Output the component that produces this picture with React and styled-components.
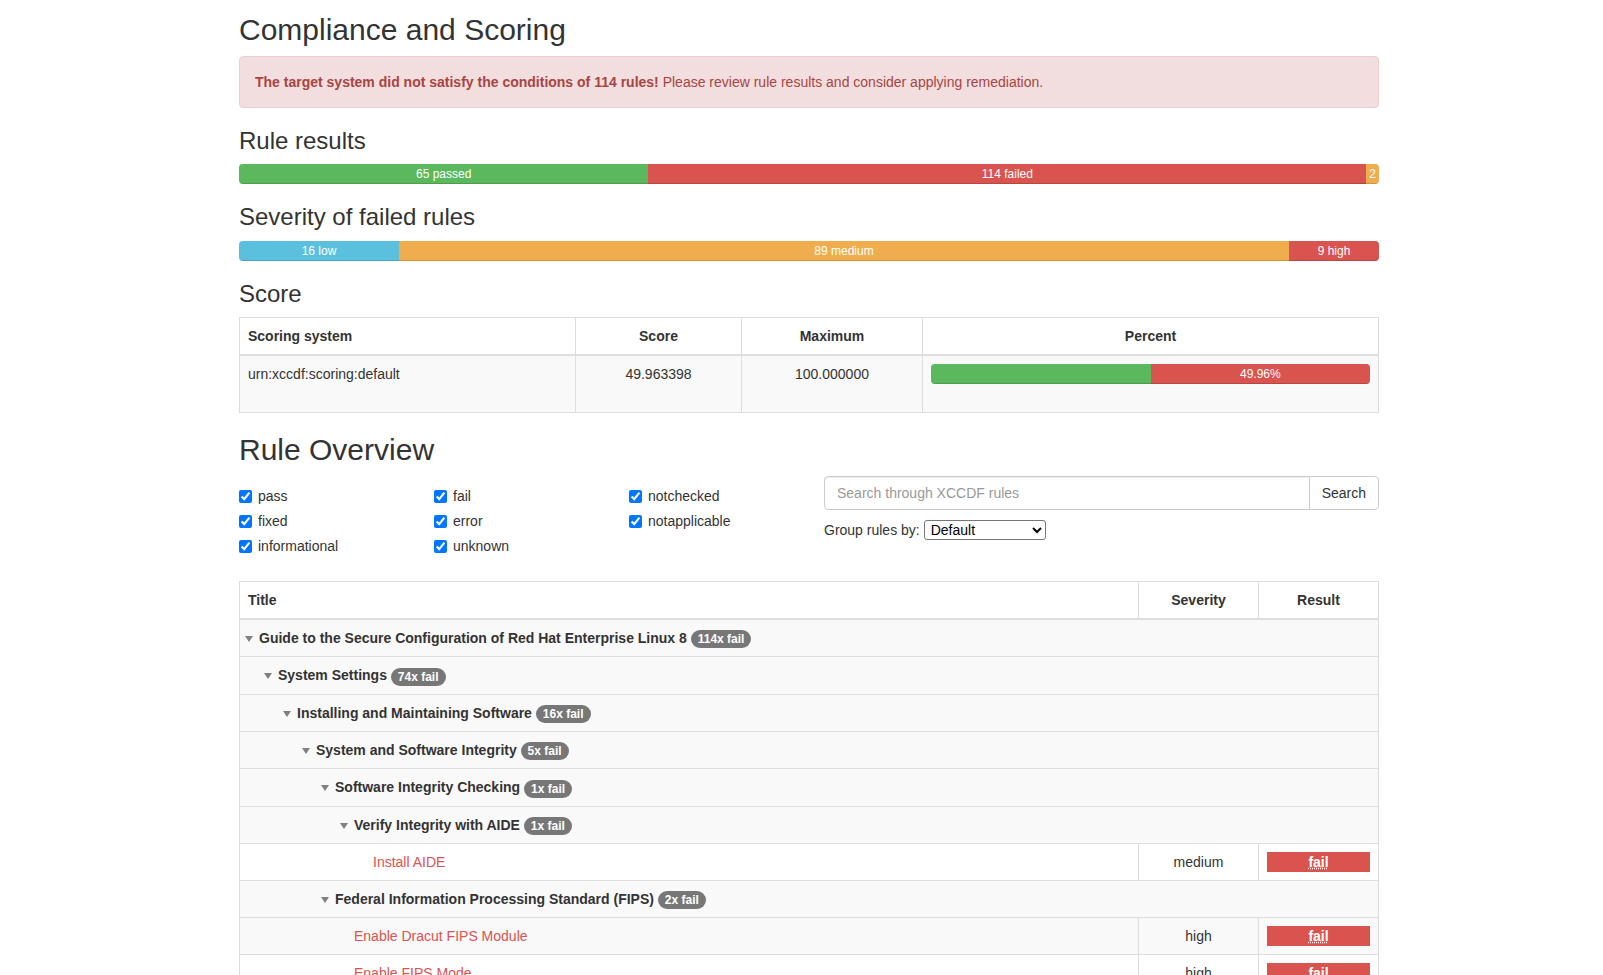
import React from 'react';
import styled, { createGlobalStyle } from 'styled-components';

// --- Global ---

const GlobalStyle = createGlobalStyle`
  html, body {
    margin: 0;
    padding: 0;
  }
  body {
    font-family: "Liberation Sans", Arial, Helvetica, sans-serif;
    font-size: 14px;
    line-height: 1.42857143;
    color: #333;
    background: #fff;
  }
`;

// --- Layout ---

const Page = styled.div`
  padding-left: 15px;
`;

const Container = styled.div`
  width: 1140px;
  margin: 0 auto;
`;

const PageTitle = styled.h2`
  font-size: 30px;
  font-weight: 500;
  line-height: 1.1;
  margin: ${(p) => (p.$first ? '13px' : '20px')} 0 10px;
`;

const SectionTitle = styled.h3`
  font-size: 24px;
  font-weight: 500;
  line-height: 1.1;
  margin: 20px 0 10px;
`;

const Alert = styled.div`
  padding: 15px;
  margin-bottom: 20px;
  border: 1px solid #ebccd1;
  border-radius: 4px;
  background: #f2dede;
  color: #a94442;
`;

// --- Progress bars ---

const tones = {
  success: '#5cb85c',
  danger: '#d9534f',
  warning: '#f0ad4e',
  info: '#5bc0de',
};

const Progress = styled.div`
  display: flex;
  height: 20px;
  margin-bottom: 20px;
  overflow: hidden;
  background: #f5f5f5;
  border-radius: 4px;
  box-shadow: inset 0 1px 2px rgba(0, 0, 0, 0.1);
`;

const Bar = styled.div`
  flex: none;
  height: 100%;
  overflow: hidden;
  white-space: nowrap;
  font-size: 12px;
  line-height: 20px;
  color: #fff;
  text-align: center;
  background: ${(p) => tones[p.$tone]};
  box-shadow: inset 0 -1px 0 rgba(0, 0, 0, 0.15);
`;

// --- Tables ---

const Table = styled.table`
  width: 100%;
  border-collapse: collapse;
  border-spacing: 0;
  border: 1px solid #ddd;
  margin: ${(p) => p.$top || 0} 0 20px;
`;

const Th = styled.th`
  box-sizing: border-box;
  width: ${(p) => p.$w || 'auto'};
  padding: 8px;
  line-height: 20px;
  font-weight: bold;
  text-align: ${(p) => p.$align || 'left'};
  vertical-align: bottom;
  border: 1px solid #ddd;
  border-bottom-width: 2px;
`;

const Tr = styled.tr`
  background: ${(p) => (p.$shaded ? '#f9f9f9' : '#fff')};
`;

const Td = styled.td`
  padding: 8px;
  line-height: 20px;
  vertical-align: top;
  text-align: ${(p) => p.$align || 'left'};
  border: 1px solid #ddd;
`;

// --- Rule overview controls ---

const Overview = styled.div`
  display: grid;
  grid-template-columns: 585px 1fr;
`;

const FilterGrid = styled.div`
  display: grid;
  grid-template-columns: repeat(3, 195px);
  padding-top: 10px;
`;

const FilterColumn = styled.div`
  display: flex;
  flex-direction: column;
  gap: 5px;
`;

const FilterLabel = styled.label`
  display: flex;
  align-items: center;
  height: 20px;
  cursor: pointer;
`;

const FilterBox = styled.input.attrs({ type: 'checkbox' })`
  width: 13px;
  height: 13px;
  margin: 0 6px 0 0;
`;

const SearchGroup = styled.div`
  display: flex;
  height: 34px;
`;

const SearchInput = styled.input`
  flex: 1;
  min-width: 0;
  box-sizing: border-box;
  height: 34px;
  padding: 6px 12px;
  font: 14px "Liberation Sans", Arial, sans-serif;
  color: #555;
  background: #fff;
  border: 1px solid #ccc;
  border-radius: 4px 0 0 4px;
  box-shadow: inset 0 1px 1px rgba(0, 0, 0, 0.075);
  outline: none;

  &::placeholder {
    color: #999;
  }
`;

const SearchButton = styled.button`
  box-sizing: border-box;
  height: 34px;
  margin-left: -1px;
  padding: 6px 12px;
  font: 14px "Liberation Sans", Arial, sans-serif;
  color: #333;
  background: #fff;
  border: 1px solid #ccc;
  border-radius: 0 4px 4px 0;
  cursor: pointer;
`;

const GroupLine = styled.div`
  display: flex;
  align-items: center;
  gap: 4px;
  height: 20px;
  margin-top: 10px;
`;

const GroupSelect = styled.select`
  box-sizing: border-box;
  width: 122px;
  height: 20px;
  padding: 0 0 0 2px;
  font: 14px "Liberation Sans", Arial, sans-serif;
  color: #000;
  background: #fff;
  border: 1px solid #767676;
  border-radius: 3px;
`;

// --- Rule tree ---

const Indent = styled.span`
  display: inline-block;
  box-sizing: content-box;
  width: 14px;
  margin-left: -3px;
  padding-left: ${(p) => p.$level * 19}px;
`;

const Caret = styled.span`
  display: inline-block;
  width: 0;
  height: 0;
  margin-bottom: 1px;
  border-left: 4px solid transparent;
  border-right: 4px solid transparent;
  border-top: 6px solid #808080;
`;

const GroupName = styled.strong`
  font-weight: bold;
`;

const Badge = styled.span`
  display: inline-block;
  padding: 3px 7px;
  font-size: 12px;
  font-weight: bold;
  line-height: 1;
  color: #fff;
  white-space: nowrap;
  vertical-align: middle;
  background: #777;
  border-radius: 10px;
`;

const RuleLink = styled.a`
  color: #d9534f;
  text-decoration: none;
`;

const ResultLabel = styled.span`
  display: block;
  font-weight: bold;
  line-height: 20px;
  color: #fff;
  text-align: center;
  background: #d9534f;
`;

const ResultAbbr = styled.abbr`
  text-decoration: underline dotted;
  cursor: help;
`;

// --- Data ---

const ruleResults = [
  { tone: 'success', count: 65, label: '65 passed' },
  { tone: 'danger', count: 114, label: '114 failed' },
  { tone: 'warning', count: 2, label: '2' },
];

const severities = [
  { tone: 'info', count: 16, label: '16 low' },
  { tone: 'warning', count: 89, label: '89 medium' },
  { tone: 'danger', count: 9, label: '9 high' },
];

const filters = [
  ['pass', 'fixed', 'informational'],
  ['fail', 'error', 'unknown'],
  ['notchecked', 'notapplicable'],
];

const tree = [
  { level: 0, title: 'Guide to the Secure Configuration of Red Hat Enterprise Linux 8', fails: 114 },
  { level: 1, title: 'System Settings', fails: 74 },
  { level: 2, title: 'Installing and Maintaining Software', fails: 16 },
  { level: 3, title: 'System and Software Integrity', fails: 5 },
  { level: 4, title: 'Software Integrity Checking', fails: 1 },
  { level: 5, title: 'Verify Integrity with AIDE', fails: 1 },
  { level: 6, title: 'Install AIDE', severity: 'medium', shaded: false },
  { level: 4, title: 'Federal Information Processing Standard (FIPS)', fails: 2 },
  { level: 5, title: 'Enable Dracut FIPS Module', severity: 'high', shaded: true },
  { level: 5, title: 'Enable FIPS Mode', severity: 'high', shaded: false },
  { level: 4, title: 'System Cryptographic Policies', fails: 2 },
  { level: 5, title: 'Configure BIND to use System Crypto Policy', severity: 'high', shaded: true },
];

const StackedBar = ({ items }) => {
  const total = items.reduce((sum, i) => sum + i.count, 0);
  return (
    <Progress>
      {items.map((i) => (
        <Bar key={i.label} $tone={i.tone} style={{ width: `${(i.count / total) * 100}%` }}>
          {i.label}
        </Bar>
      ))}
    </Progress>
  );
};

const TreeRow = ({ row }) => {
  if (row.fails) {
    return (
      <Tr $shaded>
        <Td colSpan={3}>
          <Indent $level={row.level}>
            <Caret />
          </Indent>
          <GroupName>{row.title}</GroupName> <Badge>{row.fails}x fail</Badge>
        </Td>
      </Tr>
    );
  }
  return (
    <Tr $shaded={row.shaded}>
      <Td>
        <Indent $level={row.level} />
        <RuleLink href="#">{row.title}</RuleLink>
      </Td>
      <Td $align="center">{row.severity}</Td>
      <Td $align="center">
        <ResultLabel>
          <ResultAbbr title="The target system or system component failed to satisfy all the conditions of the rule.">
            fail
          </ResultAbbr>
        </ResultLabel>
      </Td>
    </Tr>
  );
};

export default function App() {
  const score = 49.963398;
  return (
    <>
      <GlobalStyle />
      <Page>
        <Container>
          <PageTitle $first>Compliance and Scoring</PageTitle>
          <Alert>
            <strong>The target system did not satisfy the conditions of 114 rules!</strong> Please review rule
            results and consider applying remediation.
          </Alert>

          <SectionTitle>Rule results</SectionTitle>
          <StackedBar items={ruleResults} />

          <SectionTitle>Severity of failed rules</SectionTitle>
          <StackedBar items={severities} />

          <SectionTitle>Score</SectionTitle>
          <Table>
            <thead>
              <tr>
                <Th $w="336px">Scoring system</Th>
                <Th $w="166px" $align="center">Score</Th>
                <Th $w="181px" $align="center">Maximum</Th>
                <Th $align="center">Percent</Th>
              </tr>
            </thead>
            <tbody>
              <Tr $shaded>
                <Td>urn:xccdf:scoring:default</Td>
                <Td $align="center">{score.toFixed(6)}</Td>
                <Td $align="center">100.000000</Td>
                <Td>
                  <Progress>
                    <Bar $tone="success" style={{ width: `${100 - score}%` }} />
                    <Bar $tone="danger" style={{ width: `${score}%` }}>
                      {score.toFixed(2)}%
                    </Bar>
                  </Progress>
                </Td>
              </Tr>
            </tbody>
          </Table>

          <PageTitle>Rule Overview</PageTitle>
          <Overview>
            <FilterGrid>
              {filters.map((col, ci) => (
                <FilterColumn key={ci}>
                  {col.map((name) => (
                    <FilterLabel key={name}>
                      <FilterBox defaultChecked />
                      {name}
                    </FilterLabel>
                  ))}
                </FilterColumn>
              ))}
            </FilterGrid>
            <div>
              <SearchGroup>
                <SearchInput type="text" placeholder="Search through XCCDF rules" />
                <SearchButton type="button">Search</SearchButton>
              </SearchGroup>
              <GroupLine>
                Group rules by:
                <GroupSelect defaultValue="default">
                  <option value="default">Default</option>
                  <option value="severity">Severity</option>
                  <option value="result">Result</option>
                </GroupSelect>
              </GroupLine>
            </div>
          </Overview>

          <Table $top="25px">
            <thead>
              <tr>
                <Th>Title</Th>
                <Th $w="120px" $align="center">Severity</Th>
                <Th $w="120px" $align="center">Result</Th>
              </tr>
            </thead>
            <tbody>
              {tree.map((row) => (
                <TreeRow key={row.title} row={row} />
              ))}
            </tbody>
          </Table>
        </Container>
      </Page>
    </>
  );
}
